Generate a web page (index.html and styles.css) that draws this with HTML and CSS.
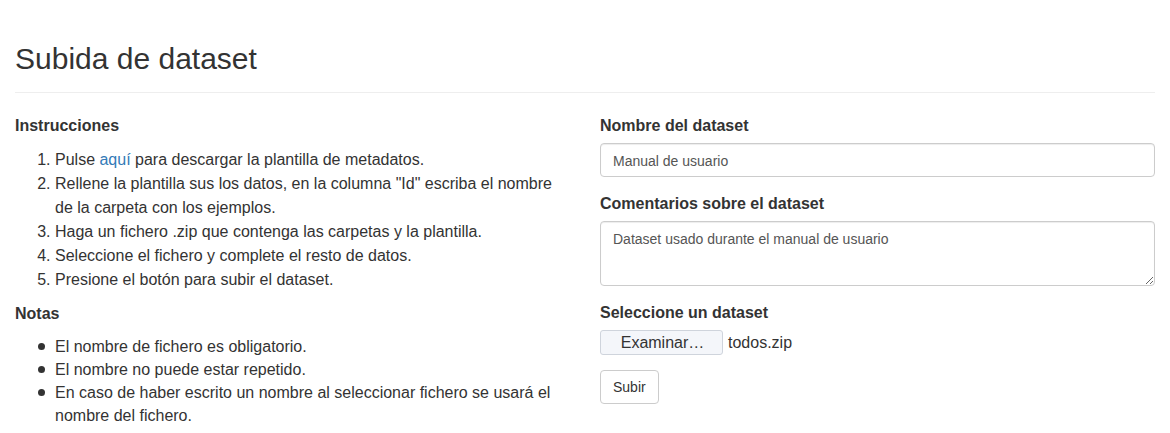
FILE: index.html
```
<!DOCTYPE html>
<html lang="es">
<head>
<meta charset="utf-8">
<title>Subida de dataset</title>
<link rel="stylesheet" href="styles.css">
</head>
<body>
<div class="container">
  <div class="page-header">
    <h2 class="title">Subida de dataset</h2>
  </div>
  <div class="row">
    <div class="col">
      <h4 class="section-title">Instrucciones</h4>
      <ol class="steps">
        <li>Pulse <a href="#" class="link">aquí</a> para descargar la plantilla de metadatos.</li>
        <li>Rellene la plantilla sus los datos, en la columna "Id" escriba el nombre de la carpeta con los ejemplos.</li>
        <li>Haga un fichero .zip que contenga las carpetas y la plantilla.</li>
        <li>Seleccione el fichero y complete el resto de datos.</li>
        <li>Presione el botón para subir el dataset.</li>
      </ol>
      <h4 class="section-title">Notas</h4>
      <ul class="notes">
        <li>El nombre de fichero es obligatorio.</li>
        <li>El nombre no puede estar repetido.</li>
        <li>En caso de haber escrito un nombre al seleccionar fichero se usará el nombre del fichero.</li>
      </ul>
    </div>
    <form class="col form">
      <div class="form-group">
        <label class="label" for="nombre">Nombre del dataset</label>
        <input class="form-control" id="nombre" type="text" value="Manual de usuario">
      </div>
      <div class="form-group">
        <label class="label" for="comentarios">Comentarios sobre el dataset</label>
        <textarea class="form-control textarea" id="comentarios">Dataset usado durante el manual de usuario</textarea>
      </div>
      <div class="form-group">
        <label class="label">Seleccione un dataset</label>
        <div class="file-row">
          <button type="button" class="file-btn">Examinar…</button>
          <span class="file-name">todos.zip</span>
        </div>
      </div>
      <button type="button" class="btn">Subir</button>
    </form>
  </div>
</div>
</body>
</html>
```
FILE: styles.css
```
* { box-sizing: border-box; }
html, body { margin: 0; padding: 0; background: #fff; }
body {
  font-family: "Liberation Sans", Arial, Helvetica, sans-serif;
  font-size: 16px;
  line-height: 24px;
  color: #333;
}
.container { padding: 0 15px; }
.page-header {
  margin: 40px 0 21px;
  padding-bottom: 9px;
  border-bottom: 1px solid #eee;
}
.title {
  margin: 0 0 8px;
  padding-top: 2px;
  font-size: 30px;
  font-weight: normal;
  line-height: 33px;
}
.row {
  display: grid;
  grid-template-columns: 1fr 1fr;
  column-gap: 30px;
}
.section-title {
  margin: 0;
  font-size: 16px;
  font-weight: bold;
  line-height: 24px;
}
.steps, .notes {
  margin: 10px 0 10px;
  padding-left: 40px;
}
.notes {
  list-style: none;
  line-height: 23px;
  margin-top: 9px;
}
.notes li { position: relative; }
.notes li::before {
  content: "";
  position: absolute;
  left: -17px;
  top: 8px;
  width: 7px;
  height: 7px;
  border-radius: 50%;
  background: #333;
}
.link { color: #337ab7; text-decoration: none; }
.form { margin: 0; }
.form-group { margin-bottom: 15px; }
.label {
  display: block;
  font-weight: bold;
  margin-bottom: 5px;
}
.form-control {
  display: block;
  width: 100%;
  height: 34px;
  padding: 7px 12px 5px;
  font-family: inherit;
  font-size: 14px;
  line-height: 20px;
  color: #555;
  background: #fff;
  border: 1px solid #ccc;
  border-radius: 4px;
  box-shadow: inset 0 1px 1px rgba(0,0,0,.075);
}
.textarea { height: 65px; resize: vertical; }
.file-row { display: flex; align-items: center; height: 25px; gap: 5px; }
.file-btn {
  height: 25px;
  width: 123px;
  padding: 0 0 0 2px;
  font-family: inherit;
  font-size: 16px;
  color: #333;
  background: #f4f6fa;
  border: 1px solid #cfd4dc;
  border-radius: 3px;
}
.file-name { font-size: 16px; }
.btn {
  display: block;
  height: 34px;
  padding: 6px 12px;
  font-family: inherit;
  font-size: 14px;
  line-height: 20px;
  color: #333;
  background: #fff;
  border: 1px solid #ccc;
  border-radius: 4px;
}
```
